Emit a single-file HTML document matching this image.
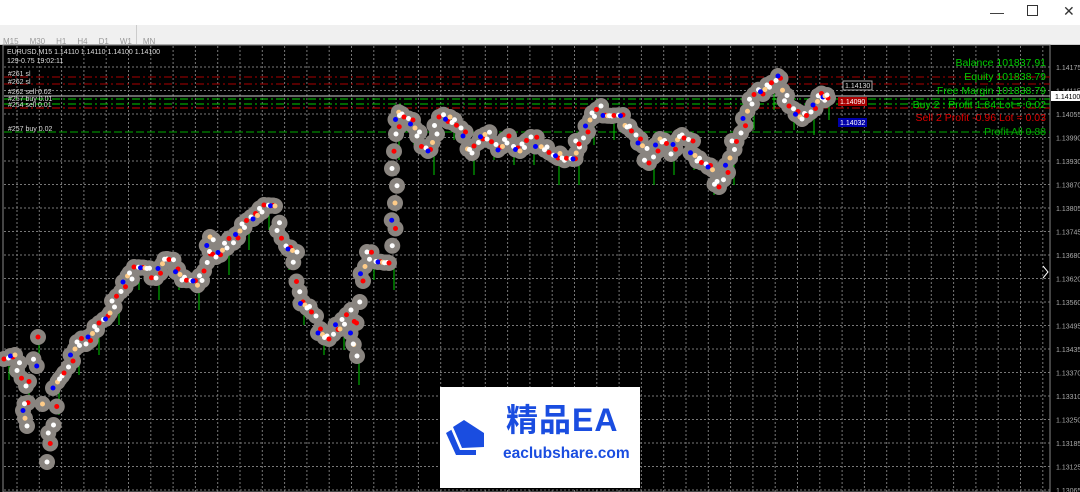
<!DOCTYPE html>
<html><head><meta charset="utf-8"><style>
body{margin:0;width:1080px;height:492px;overflow:hidden;background:#000;font-family:"Liberation Sans",sans-serif;position:relative}
#title{position:absolute;left:0;top:0;width:1080px;height:25px;background:#fff}
#tb{position:absolute;left:0;top:25px;width:1080px;height:19px;background:#f0f0f0;border-bottom:1px solid #ccc}
#tb span{font-size:8px;color:#999;margin-right:11px}
svg{position:absolute;left:0;top:0}
.wm{position:absolute;left:440px;top:387px;width:200px;height:101px;background:#fff;overflow:hidden}
</style></head><body>
<div id="title"><span style="position:absolute;left:990px;top:4px;font-size:14px;color:#333">—</span><span style="position:absolute;left:1027px;top:5px;width:9px;height:9px;border:1px solid #333"></span><span style="position:absolute;left:1063px;top:3px;font-size:14px;color:#333">✕</span></div>
<div id="tb"><div style="position:absolute;left:0;top:0;width:137px;height:19px;border-right:1px solid #ccc;padding:6px 0 0 3px;box-sizing:border-box;white-space:nowrap"><span>M15</span><span>M30</span><span>H1</span><span>H4</span><span>D1</span><span>W1</span><span>MN</span></div></div>
<svg id="c" width="1080" height="492" style="top:0"></svg>
<div class="wm">
<svg width="50" height="50" style="left:4px;top:24px" viewBox="0 0 50 50"><path d="M2 22 L12 16 L32 30 L32 44 L12 44 Z" fill="#1a4de0"/><path d="M7 18 L18 11 L38 25 L38 39 L16 39 Z" fill="#fff"/><path d="M9 16 L20 9 L40 22 L40 36 L18 37 Z" fill="#1a4de0"/></svg>
<div style="position:absolute;left:66px;top:14px;font:bold 32px 'Liberation Sans','Noto Sans CJK SC',sans-serif;color:#1a4de0;letter-spacing:1px;line-height:38px">精品EA</div>
<div style="position:absolute;left:63px;top:58px;font:bold 15.5px 'Liberation Sans',sans-serif;color:#1a4de0;line-height:18px">eaclubshare.com</div>
</div>
<script>
var s='';
s+='<rect x="3" y="45" width="1047" height="447" fill="#000" stroke="#888"/>';
for(var x=17;x<1050;x+=22.3)s+='<line x1="'+x+'" y1="46" x2="'+x+'" y2="492" stroke="#777" stroke-dasharray="2,2"/>';
var prices=["1.14175","1.14115","1.14055","1.13990","1.13930","1.13870","1.13805","1.13745","1.13680","1.13620","1.13560","1.13495","1.13435","1.13370","1.13310","1.13250","1.13185","1.13125","1.13065"];
for(var i=0;i<19;i++){var y=67+i*23.5;s+='<line x1="4" y1="'+y+'" x2="1050" y2="'+y+'" stroke="#777" stroke-dasharray="2,2"/><text x="1056" y="'+(y+3)+'" font-size="7" fill="#aaa">'+prices[i]+'</text>';}
s+='<line x1="4" y1="77" x2="1050" y2="77" stroke="#a00" stroke-dasharray="8,3,2,3"/><line x1="4" y1="84" x2="1050" y2="84" stroke="#a00" stroke-dasharray="8,3,2,3"/>';
s+='<line x1="4" y1="96" x2="1050" y2="96" stroke="#ccc"/><line x1="4" y1="99" x2="1050" y2="99" stroke="#0c0" stroke-dasharray="8,3,2,3"/><line x1="4" y1="104" x2="1050" y2="104" stroke="#0c0" stroke-dasharray="8,3,2,3"/><line x1="4" y1="108" x2="1050" y2="108" stroke="#c00" stroke-dasharray="8,3,2,3"/><line x1="4" y1="132" x2="1050" y2="132" stroke="#0a0" stroke-dasharray="8,3"/>';
s+='<rect x="1051" y="91" width="29" height="10" fill="#fff"/><text x="1055" y="99" font-size="7" fill="#000">1.14100</text>';
var P=[[5,355],[15,355],[25,390],[25,425],[35,340],[50,460],[55,390],[65,370],[75,350],[85,340],[95,330],[105,320],[115,300],[125,285],[135,265],[145,270],[155,275],[165,260],[175,265],[185,280],[195,285],[205,270],[210,240],[215,255],[225,250],[235,235],[245,225],[255,215],[265,205],[275,210],[285,245],[295,255],[300,300],[310,310],[320,330],[330,340],[340,325],[350,310],[355,360],[360,280],[370,255],[380,260],[390,265],[395,200],[395,135],[400,110],[410,120],[420,140],[430,150],[440,120],[450,115],[460,130],[470,150],[480,140],[490,135],[500,150],[510,140],[520,150],[530,140],[545,145],[555,160],[565,155],[575,160],[580,140],[590,120],[600,110],[610,115],[620,118],[630,125],[640,145],[650,160],[660,140],[670,150],[680,135],[690,145],[700,160],[710,170],[720,185],[730,160],[740,130],[750,105],[760,90],[770,85],[780,80],[790,105],[800,120],[810,110],[820,100],[825,95]];
var blobs='',dots='',k=0;
for(var i=0;i<P.length;i++){var p=P[i];var q=P[i+1]||p;for(var t=0;t<1;t+=0.25){k++;var x=p[0]+(q[0]-p[0])*t+((k*37)%7-3),y=p[1]+(q[1]-p[1])*t+((k*53)%9-4);blobs+='<circle cx="'+x+'" cy="'+y+'" r="8" fill="#8a8580"/>';
var c=['#fff','#f00','#fff','#f00','#00f','#fc8','#fff'][k%7];dots+='<circle cx="'+x+'" cy="'+y+'" r="2.5" fill="'+c+'"/>';}
if(i%2==0)s+='<line x1="'+(p[0]+4)+'" y1="'+p[1]+'" x2="'+(p[0]+4)+'" y2="'+(p[1]+25)+'" stroke="#0c0"/>';}
s+=blobs+dots;
s+='<text x="7" y="54" font-size="7" fill="#ddd">EURUSD,M15  1.14110 1.14110 1.14100 1.14100</text><text x="7" y="63" font-size="7" fill="#ddd">129-0.75     19:02:11</text>';
s+='<text x="8" y="76" font-size="7" fill="#ddd">#261 sl</text><text x="8" y="84" font-size="7" fill="#ddd">#262 sl</text><text x="8" y="94" font-size="7" fill="#ddd">#262 sell 0.02</text><text x="8" y="101" font-size="7" fill="#ddd">#257 buy 0.01</text><text x="8" y="107" font-size="7" fill="#ddd">#254 sell 0.01</text><text x="8" y="131" font-size="7" fill="#ddd">#257 buy 0.02</text>';
var R=[["Balance 101837.91","#0c0",66],["Equity 101838.79","#0c0",80],["Free Margin 101838.79","#0c0",94],["Buy 2 : Profit 1.84  Lot = 0.02","#0c0",108],["Sell 2   Profit -0.96  Lot = 0.03","#d00",121],["Profit All 0.88","#0a0",135]];
R.forEach(function(r){s+='<text x="1046" y="'+r[2]+'" font-size="10.5" text-anchor="end" fill="'+r[1]+'">'+r[0]+'</text>';});
s+='<rect x="843" y="81" width="29" height="9" fill="#000" stroke="#aaa"/><text x="845" y="88" font-size="7" fill="#ddd">1.14130</text>';
s+='<rect x="838" y="97" width="29" height="9" fill="#a00"/><text x="840" y="104" font-size="7" fill="#fff">1.14090</text>';
s+='<rect x="838" y="118" width="29" height="9" fill="#00a"/><text x="840" y="125" font-size="7" fill="#fff">1.14032</text>';
s+='<path d="M1043 266 L1048 272 L1043 278" stroke="#fff" fill="none"/>';
document.getElementById('c').innerHTML=s;
</script>
</body></html>
